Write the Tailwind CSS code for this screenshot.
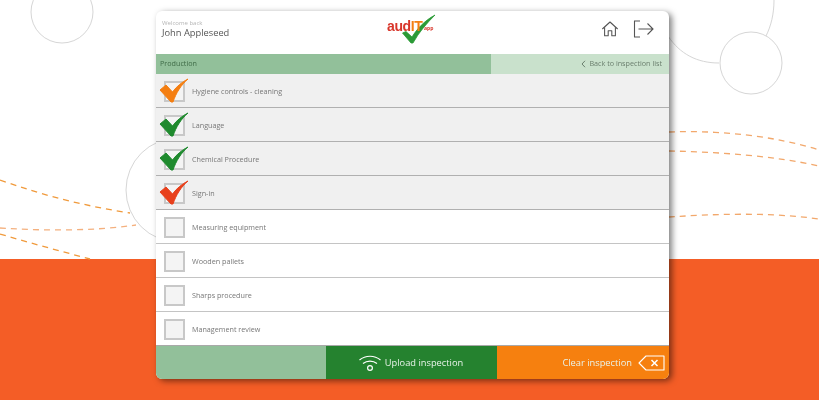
<!DOCTYPE html>
<html lang="en">
<head>
  <meta charset="UTF-8" />
  <title>audIT app</title>
  <script src="https://cdn.jsdelivr.net/npm/@tailwindcss/browser@4"></script>
</head>
<body class="bg-white">
<div class="relative w-[819px] h-[400px] overflow-hidden bg-white font-['Open_Sans',sans-serif] blur-[0.4px]">

  <!-- background decoration -->
  <div class="absolute left-0 right-0 top-[259px] bottom-0 bg-[#f45d26]"></div>
  <svg class="absolute inset-0" width="819" height="400" fill="none">
    <g stroke="#d6d6d6" stroke-width="1">
      <circle cx="62" cy="12" r="31" />
      <circle cx="178" cy="190" r="52" />
      <path d="M668 36C680 54 697 63 719 63" />
      <path d="M766 36C771 26 774 14 774 0" />
      <circle cx="751" cy="63" r="31" />
    </g>
    <g fill="none" stroke-width="1.3" stroke-dasharray="6 5">
      <path d="M0 180C45 196 85 206 130 213" stroke="#f09a3c" />
      <path d="M0 228C45 231 95 231 136 225" stroke="#f4b07e" />
      <path d="M0 234C30 243 60 251 90 259" stroke="#f09a3c" />
      <path d="M669 132C720 130 775 136 819 150" stroke="#f2a86c" />
      <path d="M669 151C720 152 775 156 819 166" stroke="#f2a86c" />
      <path d="M669 217C715 214 770 212 819 219" stroke="#f2a86c" />
    </g>
  </svg>

  <!-- card -->
  <div class="absolute left-[156px] top-[11px] w-[513px] h-[368px] flex flex-col bg-white rounded-[6px] overflow-hidden shadow-[3px_2px_6px_rgba(0,0,0,0.5)]">

    <header class="h-[43px] shrink-0 flex items-center pl-[6px] pr-[15px] pb-[7px] relative">
      <div class="leading-none">
        <div class="text-[6px] text-[#b5b5b5] mb-[2px]">Welcome back</div>
        <div class="text-[9.3px] text-[#555]">John Appleseed</div>
      </div>
      <!-- logo -->
      <div class="absolute left-[231px] top-[1px] w-[52px] h-[34px]">
        <svg class="absolute left-0 top-0" width="52" height="34" viewBox="0 0 52 34" fill="none">
          <path d="M15.5 21L19 19.5L25 25C30 17 37 9 48 3C40 11 32 20 26 31H24Z" fill="#fff" stroke="#fff" stroke-width="4" stroke-linejoin="round" />
          <path d="M15.5 21L19 19.5L25 25C30 17 37 9 48 3C40 11 32 20 26 31H24Z" fill="#2b9a36" stroke="#2b9a36" stroke-width="0.8" stroke-linejoin="round" />
        </svg>
        <div class="absolute left-0 top-[7px] text-[14px] font-bold tracking-[-0.4px] leading-none text-[#d8352a] font-['Liberation_Sans',sans-serif]">aud<span class="text-[#f47f12]">IT</span></div>
        <div class="absolute left-[37px] top-[14px] text-[5px] font-bold leading-none text-[#d8352a]">app</div>
      </div>
      <div class="ml-auto flex items-center gap-[14px] text-[#555]">
        <svg width="18" height="18" viewBox="0 0 20 20" fill="none" stroke="currentColor" stroke-width="1.2" stroke-linejoin="round">
          <path d="M1.5 10L10 2.2L18.5 10" />
          <path d="M4 8V17.5H8V12H12V17.5H16V8" />
        </svg>
        <svg width="21" height="18" viewBox="0 0 21 18" fill="none" stroke="currentColor" stroke-width="1.1">
          <path d="M7 1H1.5V17H7" />
          <path d="M5.5 9H20M14.5 3.5L20 9L14.5 14.5" />
        </svg>
      </div>
    </header>

    <div class="h-[20px] shrink-0 flex text-[7.2px] leading-none">
      <div class="w-[335px] bg-[#92c09a] flex items-center pl-[4px] text-[#3f6b47]">Production</div>
      <div class="flex-1 bg-[#c9e1cc] flex items-center justify-end pr-[7px] text-[#6b7f6e] gap-[3px]">
        <svg width="5" height="8" viewBox="0 0 5 8" fill="none" stroke="currentColor" stroke-width="1"><path d="M4 0.8L1 4L4 7.2" /></svg>
        <span>Back to inspection list</span>
      </div>
    </div>

    <ul class="flex-1 flex flex-col text-[7.2px] text-[#777]">
      <li class="h-[34px] pt-[1px] flex items-center bg-[#f0f0f0] border-b border-[#b0b0b0] relative">
        <span class="ml-[8px] w-[21px] h-[21px] border-2 border-[#c8c8c8] bg-[#f4f4f4]"></span>
        <svg class="absolute left-0 top-0" width="34" height="34" viewBox="0 0 34 34"><path d="M4 16L10 11L16.5 18C21 12 26 8 32 5C25 11 20 19 17 28H15Z" fill="#f47f12" stroke="#f47f12" stroke-linejoin="round" /></svg>
        <span class="ml-[7px]">Hygiene controls - cleaning</span>
      </li>
      <li class="h-[34px] pt-[1px] flex items-center bg-[#f0f0f0] border-b border-[#b0b0b0] relative">
        <span class="ml-[8px] w-[21px] h-[21px] border-2 border-[#c8c8c8] bg-[#f4f4f4]"></span>
        <svg class="absolute left-0 top-0" width="34" height="34" viewBox="0 0 34 34"><path d="M4 16L10 11L16.5 18C21 12 26 8 32 5C25 11 20 19 17 28H15Z" fill="#1f8a2e" stroke="#1f8a2e" stroke-linejoin="round" /></svg>
        <span class="ml-[7px]">Language</span>
      </li>
      <li class="h-[34px] pt-[1px] flex items-center bg-[#f0f0f0] border-b border-[#b0b0b0] relative">
        <span class="ml-[8px] w-[21px] h-[21px] border-2 border-[#c8c8c8] bg-[#f4f4f4]"></span>
        <svg class="absolute left-0 top-0" width="34" height="34" viewBox="0 0 34 34"><path d="M4 16L10 11L16.5 18C21 12 26 8 32 5C25 11 20 19 17 28H15Z" fill="#1f8a2e" stroke="#1f8a2e" stroke-linejoin="round" /></svg>
        <span class="ml-[7px]">Chemical Procedure</span>
      </li>
      <li class="h-[34px] pt-[1px] flex items-center bg-[#f0f0f0] border-b border-[#b0b0b0] relative">
        <span class="ml-[8px] w-[21px] h-[21px] border-2 border-[#c8c8c8] bg-[#f4f4f4]"></span>
        <svg class="absolute left-0 top-0" width="34" height="34" viewBox="0 0 34 34"><path d="M4 16L10 11L16.5 18C21 12 26 8 32 5C25 11 20 19 17 28H15Z" fill="#e8401c" stroke="#e8401c" stroke-linejoin="round" /></svg>
        <span class="ml-[7px]">Sign-in</span>
      </li>
      <li class="h-[34px] pt-[1px] flex items-center border-b border-[#c4c4c4]">
        <span class="ml-[8px] w-[21px] h-[21px] border-2 border-[#c8c8c8] bg-[#f4f4f4]"></span>
        <span class="ml-[7px]">Measuring equipment</span>
      </li>
      <li class="h-[34px] pt-[1px] flex items-center border-b border-[#c4c4c4]">
        <span class="ml-[8px] w-[21px] h-[21px] border-2 border-[#c8c8c8] bg-[#f4f4f4]"></span>
        <span class="ml-[7px]">Wooden pallets</span>
      </li>
      <li class="h-[34px] pt-[1px] flex items-center border-b border-[#c4c4c4]">
        <span class="ml-[8px] w-[21px] h-[21px] border-2 border-[#c8c8c8] bg-[#f4f4f4]"></span>
        <span class="ml-[7px]">Sharps procedure</span>
      </li>
      <li class="flex-1 pt-[1px] flex items-center">
        <span class="ml-[8px] w-[21px] h-[21px] border-2 border-[#c8c8c8] bg-[#f4f4f4]"></span>
        <span class="ml-[7px]">Management review</span>
      </li>
    </ul>

    <footer class="h-[34px] shrink-0 flex border-t border-[#a9a9a9] text-[9.3px] text-[#e9f3ea]">
      <div class="w-[170px] bg-[#92c09a]"></div>
      <div class="w-[171px] bg-[#25822f] flex items-center justify-center gap-[3px] pr-[2px]">
        <svg width="24" height="18" viewBox="0 0 24 18" fill="none" stroke="#fff" stroke-width="1.2">
          <path d="M1.5 6C7.5 1 16.5 1 22.5 6" />
          <path d="M5 9.5C9 6.3 15 6.3 19 9.5" />
          <circle cx="12" cy="14" r="2.4" />
        </svg>
        <span>Upload inspection</span>
      </div>
      <div class="flex-1 bg-[#f6800f] flex items-center justify-end pr-[3px] gap-[6px]">
        <span>Clear inspection</span>
        <svg width="28" height="18" viewBox="0 0 28 18" fill="none" stroke="#fff" stroke-width="1.1" stroke-linejoin="round">
          <path d="M8 2H26V16H8L1 9Z" />
          <path d="M13.5 6L19.5 12M19.5 6L13.5 12" stroke-width="1.5" />
        </svg>
      </div>
    </footer>
  </div>
</div>
</body>
</html>
